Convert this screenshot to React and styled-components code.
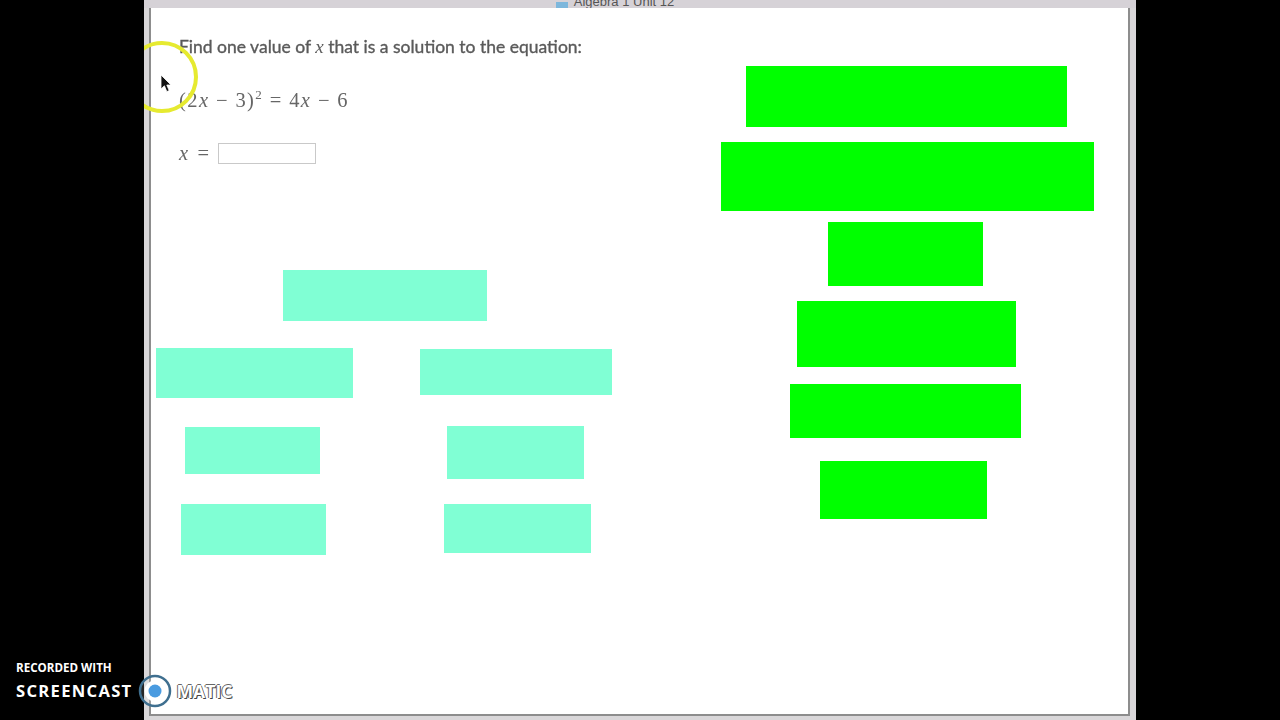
import React from 'react';
import styled, { createGlobalStyle } from 'styled-components';

const GlobalStyle = createGlobalStyle`
  html, body {
    margin: 0;
    height: 100%;
    background: #000;
  }
`;

const Page = styled.div`
  width: 1280px;
  height: 720px;
  background: #000;
  display: flex;
  justify-content: center;
  overflow: hidden;
`;

const Window = styled.div`
  position: relative;
  width: 992px;
  height: 720px;
  box-sizing: border-box;
  background: #d9d7d9;
  display: flex;
  flex-direction: column;
  overflow: hidden;
`;

const TitleBar = styled.div`
  height: 8px;
  flex: none;
  display: flex;
  justify-content: center;
  align-items: flex-end;
  gap: 6px;
  padding-right: 50px;
  background: #d6d2d7;
  overflow: hidden;
`;

const TitleIcon = styled.span`
  width: 12px;
  height: 6px;
  background: #7db7dc;
  flex: none;
`;

const TitleText = styled.span`
  font: 13px/13px "Liberation Sans", Arial, sans-serif;
  color: #555;
  white-space: nowrap;
`;

const Sheet = styled.main`
  margin: 0 6px 0 5px;
  height: 708px;
  flex: none;
  box-sizing: border-box;
  background: #fff;
  border-left: 2px solid #8d8d8d;
  border-right: 2px solid #8d8d8d;
  border-bottom: 2px solid #8d8d8d;
  display: flex;
`;

const LeftPane = styled.section`
  width: 570px;
  flex: none;
  display: flex;
  flex-direction: column;
`;

const Question = styled.div`
  padding: 28px 0 0 28px;
  height: 262px;
  box-sizing: border-box;
  color: #555;
  filter: blur(0.35px);
`;

const Prompt = styled.p`
  margin: 0;
  font: 400 17.5px/22px Lato, "Open Sans", sans-serif;
  -webkit-text-stroke: 0.35px #5a5a5a;
  color: #5a5a5a;
  white-space: nowrap;
`;

const Var = styled.i`
  font-family: "Liberation Serif", serif;
  font-weight: 400;
  font-size: 19px;
  -webkit-text-stroke: 0;
`;

const Equation = styled.div`
  margin-top: 30px;
  font: 400 20.5px/24px "Liberation Serif", serif;
  letter-spacing: 1.4px;
  color: #666;
  white-space: nowrap;

  sup {
    font-size: 13px;
    line-height: 0;
  }
`;

const AnswerRow = styled.div`
  margin-top: 31px;
  display: flex;
  align-items: center;
  gap: 6px;
  font: 400 20.5px/21px "Liberation Serif", serif;
  letter-spacing: 3.4px;
  color: #666;
`;

const AnswerInput = styled.input`
  width: 98px;
  height: 21px;
  box-sizing: border-box;
  margin: 0;
  padding: 0;
  background: #fff;
  border: 1px solid #c9c9c9;
`;

const Tree = styled.div`
  padding-left: 5px;
`;

const Columns = styled.div`
  display: flex;
  margin-top: 27px;
`;

const Column = styled.div`
  width: ${p => p.$w}px;
  flex: none;
`;

const Box = styled.div`
  width: ${p => p.$w}px;
  height: ${p => p.$h}px;
  margin-left: ${p => p.$left || 0}px;
  margin-top: ${p => p.$top || 0}px;
  background: ${p => p.$green ? '#00ff00' : '#80ffd4'};
`;

const RightPane = styled.section`
  padding-top: 58px;
`;

const Ring = styled.div`
  position: absolute;
  left: -18px;
  top: 41px;
  width: 72px;
  height: 72px;
  box-sizing: border-box;
  border: 4px solid #e6ea30;
  border-radius: 50%;
`;

const Cursor = styled.svg`
  position: absolute;
  left: 16px;
  top: 74px;
  width: 12px;
  height: 19px;
`;

const Watermark = styled.div`
  position: absolute;
  left: 16px;
  top: 660px;
  color: #fff;
  font-family: "Open Sans", "Liberation Sans", sans-serif;
  font-weight: 700;
`;

const RecordedWith = styled.div`
  font-size: 11.6px;
  line-height: 16px;
`;

const Brand = styled.div`
  margin-top: -1px;
  display: flex;
  align-items: center;
  height: 32px;
`;

const BrandWord = styled.span`
  font-size: 16.6px;
  letter-spacing: 1.3px;
  line-height: 32px;
`;

const BrandLogo = styled.svg`
  width: 36px;
  height: 36px;
  margin: 0 4px 0 4px;
  flex: none;
`;

const BrandMatic = styled.span`
  font-size: 17.6px;
  line-height: 32px;
  color: #fff;
  text-shadow: 1px 1px 0 #444, -1px 0 0 #666, 0 -1px 0 #666;
`;

const greenBoxes = [
  { w: 321, h: 61, left: 25, top: 0 },
  { w: 373, h: 69, left: 0, top: 15 },
  { w: 155, h: 64, left: 107, top: 11 },
  { w: 219, h: 66, left: 76, top: 15 },
  { w: 231, h: 54, left: 69, top: 17 },
  { w: 167, h: 58, left: 99, top: 23 },
];

const App = () => (
  <Page>
    <GlobalStyle />
    <Window>
      <TitleBar>
        <TitleIcon />
        <TitleText>Algebra 1 Unit 12</TitleText>
      </TitleBar>
      <Sheet>
        <LeftPane>
          <Question>
            <Prompt>Find one value of <Var>x</Var> that is a solution to the equation:</Prompt>
            <Equation>(2<i>x</i> − 3)<sup>2</sup> = 4<i>x</i> − 6</Equation>
            <AnswerRow>
              <i>x</i> =
              <AnswerInput aria-label="x" />
            </AnswerRow>
          </Question>
          <Tree>
            <Box $w={204} $h={51} $left={127} />
            <Columns>
              <Column $w={264}>
                <Box $w={197} $h={50} />
                <Box $w={135} $h={47} $left={29} $top={29} />
                <Box $w={145} $h={51} $left={25} $top={30} />
              </Column>
              <Column $w={200}>
                <Box $w={192} $h={46} $top={1} />
                <Box $w={137} $h={53} $left={27} $top={31} />
                <Box $w={147} $h={49} $left={24} $top={25} />
              </Column>
            </Columns>
          </Tree>
        </LeftPane>
        <RightPane>
          {greenBoxes.map((b, i) => (
            <Box key={i} $green $w={b.w} $h={b.h} $left={b.left} $top={b.top} />
          ))}
        </RightPane>
      </Sheet>
      <Ring />
      <Cursor viewBox="0 0 12 19">
        <path d="M1 1 L1 15 L4.4 11.8 L6.8 17.6 L9.2 16.6 L6.8 11 L11 11 Z" fill="#111" stroke="#fff" strokeWidth="0.8" />
      </Cursor>
    </Window>
    <Watermark>
      <RecordedWith>RECORDED WITH</RecordedWith>
      <Brand>
        <BrandWord>SCREENCAST</BrandWord>
        <BrandLogo viewBox="0 0 36 36">
          <circle cx="18" cy="18" r="15" fill="#fff" fillOpacity="0.15" stroke="#3f6f8f" strokeWidth="2.5" />
          <circle cx="18" cy="18" r="10.5" fill="#fff" />
          <circle cx="18" cy="18" r="6.5" fill="#4a9be0" />
        </BrandLogo>
        <BrandMatic>MATIC</BrandMatic>
      </Brand>
    </Watermark>
  </Page>
);

export default App;
